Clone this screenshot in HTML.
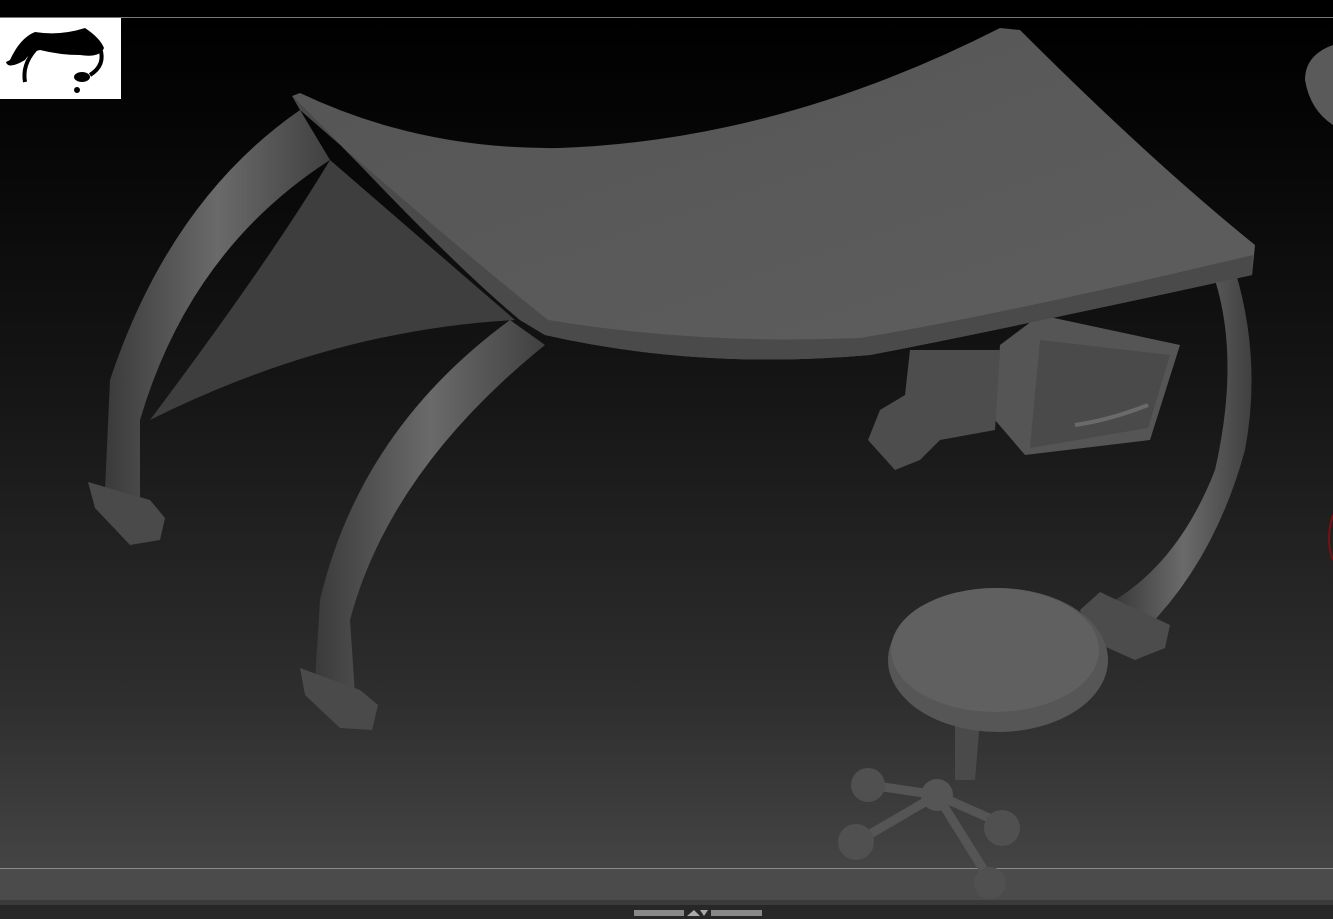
<!DOCTYPE html>
<html><head><style>
html,body{margin:0;padding:0;width:1333px;height:919px;overflow:hidden;background:#000;}
#v{position:absolute;left:0;top:0;width:1333px;height:919px;background:linear-gradient(#000 17px,#050505 120px,#161616 400px,#2e2e2e 700px,#444 868px);}
</style></head><body>
<div id="v"></div>
<svg width="1333" height="919" style="position:absolute;left:0;top:0">
<defs>
<linearGradient id="top" x1="0" y1="0" x2="1" y2="1"><stop offset="0" stop-color="#555"/><stop offset="1" stop-color="#5e5e5e"/></linearGradient>
<linearGradient id="leg" x1="0" y1="0" x2="1" y2="0"><stop offset="0" stop-color="#3a3a3a"/><stop offset=".5" stop-color="#6a6a6a"/><stop offset="1" stop-color="#404040"/></linearGradient>
</defs>
<line x1="0" y1="17.5" x2="1333" y2="17.5" stroke="#777"/>
<rect x="0" y="18" width="121" height="81" fill="#fff"/>
<path d="M10 60 Q20 38 35 32 Q60 36 85 28 Q100 38 104 48 Q100 58 80 55 Q60 55 40 50 Q30 52 25 60 Q8 70 6 62Z" fill="#000"/>
<path d="M35 50 Q22 65 25 82" stroke="#000" stroke-width="4" fill="none"/>
<path d="M100 48 Q106 65 90 75" stroke="#000" stroke-width="4" fill="none"/>
<ellipse cx="82" cy="77" rx="8" ry="5" fill="#000"/>
<circle cx="77" cy="90" r="3" fill="#000"/>
<path d="M330 160 Q270 260 150 420 Q330 330 515 320 Z" fill="#3e3e3e"/>
<path d="M300 110 Q170 200 110 380 L105 490 L140 505 L140 420 Q190 250 330 160Z" fill="url(#leg)"/>
<path d="M88 482 L150 500 L165 518 L160 540 L130 545 L95 508Z" fill="#4a4a4a"/>
<path d="M510 320 Q360 430 320 600 L315 680 L355 695 L350 620 Q390 470 545 345Z" fill="url(#leg)"/>
<path d="M300 668 L360 690 L378 705 L372 730 L340 728 L305 695Z" fill="#4a4a4a"/>
<path d="M1215 280 Q1240 360 1215 470 Q1180 560 1115 600 L1145 630 Q1215 560 1245 450 Q1262 360 1235 270Z" fill="url(#leg)"/>
<path d="M1080 610 L1100 592 L1170 625 L1165 648 L1135 660 L1090 640Z" fill="#4c4c4c"/>
<path d="M1000 345 L1040 315 L1180 345 L1150 440 L1025 455 L995 420Z" fill="#555"/>
<path d="M1040 340 L1170 355 L1148 428 L1030 448Z" fill="#4a4a4a"/>
<path d="M1075 425 Q1110 420 1148 405" stroke="#6a6a6a" stroke-width="4" fill="none"/>
<path d="M910 350 L1000 350 L995 430 L940 440 L920 460 L895 470 L868 440 L880 410 L905 395Z" fill="#4d4d4d"/>
<path d="M292 96 L300 93 Q420 150 560 148 Q780 140 1000 28 L1020 30 Q1150 160 1255 245 L1252 275 Q1000 330 870 355 Q700 370 545 335 L520 320 Q460 270 360 165 Z" fill="url(#top)"/>
<path d="M292 96 L360 165 Q460 270 520 320 L545 335 Q700 370 870 355 Q1000 330 1252 275 L1253 255 Q1000 315 860 338 Q700 345 548 320 Q460 250 300 110Z" fill="#4a4a4a"/>
<path d="M1333 45 Q1305 55 1305 80 Q1310 110 1333 125Z" fill="#5a5a5a"/>
<path d="M1333 515 Q1325 540 1333 560" stroke="#7a1010" stroke-width="2" fill="none"/>
<line x1="0" y1="868.5" x2="1333" y2="868.5" stroke="#8a8a8a"/>
<rect x="0" y="869" width="1333" height="31" fill="#4b4b4b"/>
<rect x="0" y="900" width="1333" height="5" fill="#3a3a3a"/>
<rect x="0" y="905" width="1333" height="14" fill="#272727"/>
<rect x="634" y="910" width="50" height="6" fill="#888"/>
<rect x="711" y="910" width="51" height="6" fill="#888"/>
<path d="M687 916 L694 910 L700 916Z M700 910 L708 910 L704 916Z" fill="#aaa"/>
<!-- stool -->
<path d="M955 720 L980 720 L975 780 L955 780Z" fill="#4a4a4a"/>
<ellipse cx="998" cy="660" rx="110" ry="72" fill="#565656"/>
<ellipse cx="995" cy="650" rx="104" ry="62" fill="#606060"/>
<circle cx="937" cy="795" r="16" fill="#555"/>
<path d="M937 795 L870 785 M937 795 L860 840 M937 795 L990 880 M937 795 L1005 825" stroke="#555" stroke-width="9"/>
<circle cx="868" cy="785" r="17" fill="#505050"/><circle cx="856" cy="842" r="18" fill="#505050"/>
<circle cx="990" cy="883" r="16" fill="#505050"/><circle cx="1002" cy="828" r="18" fill="#505050"/>
</svg>
</body></html>
